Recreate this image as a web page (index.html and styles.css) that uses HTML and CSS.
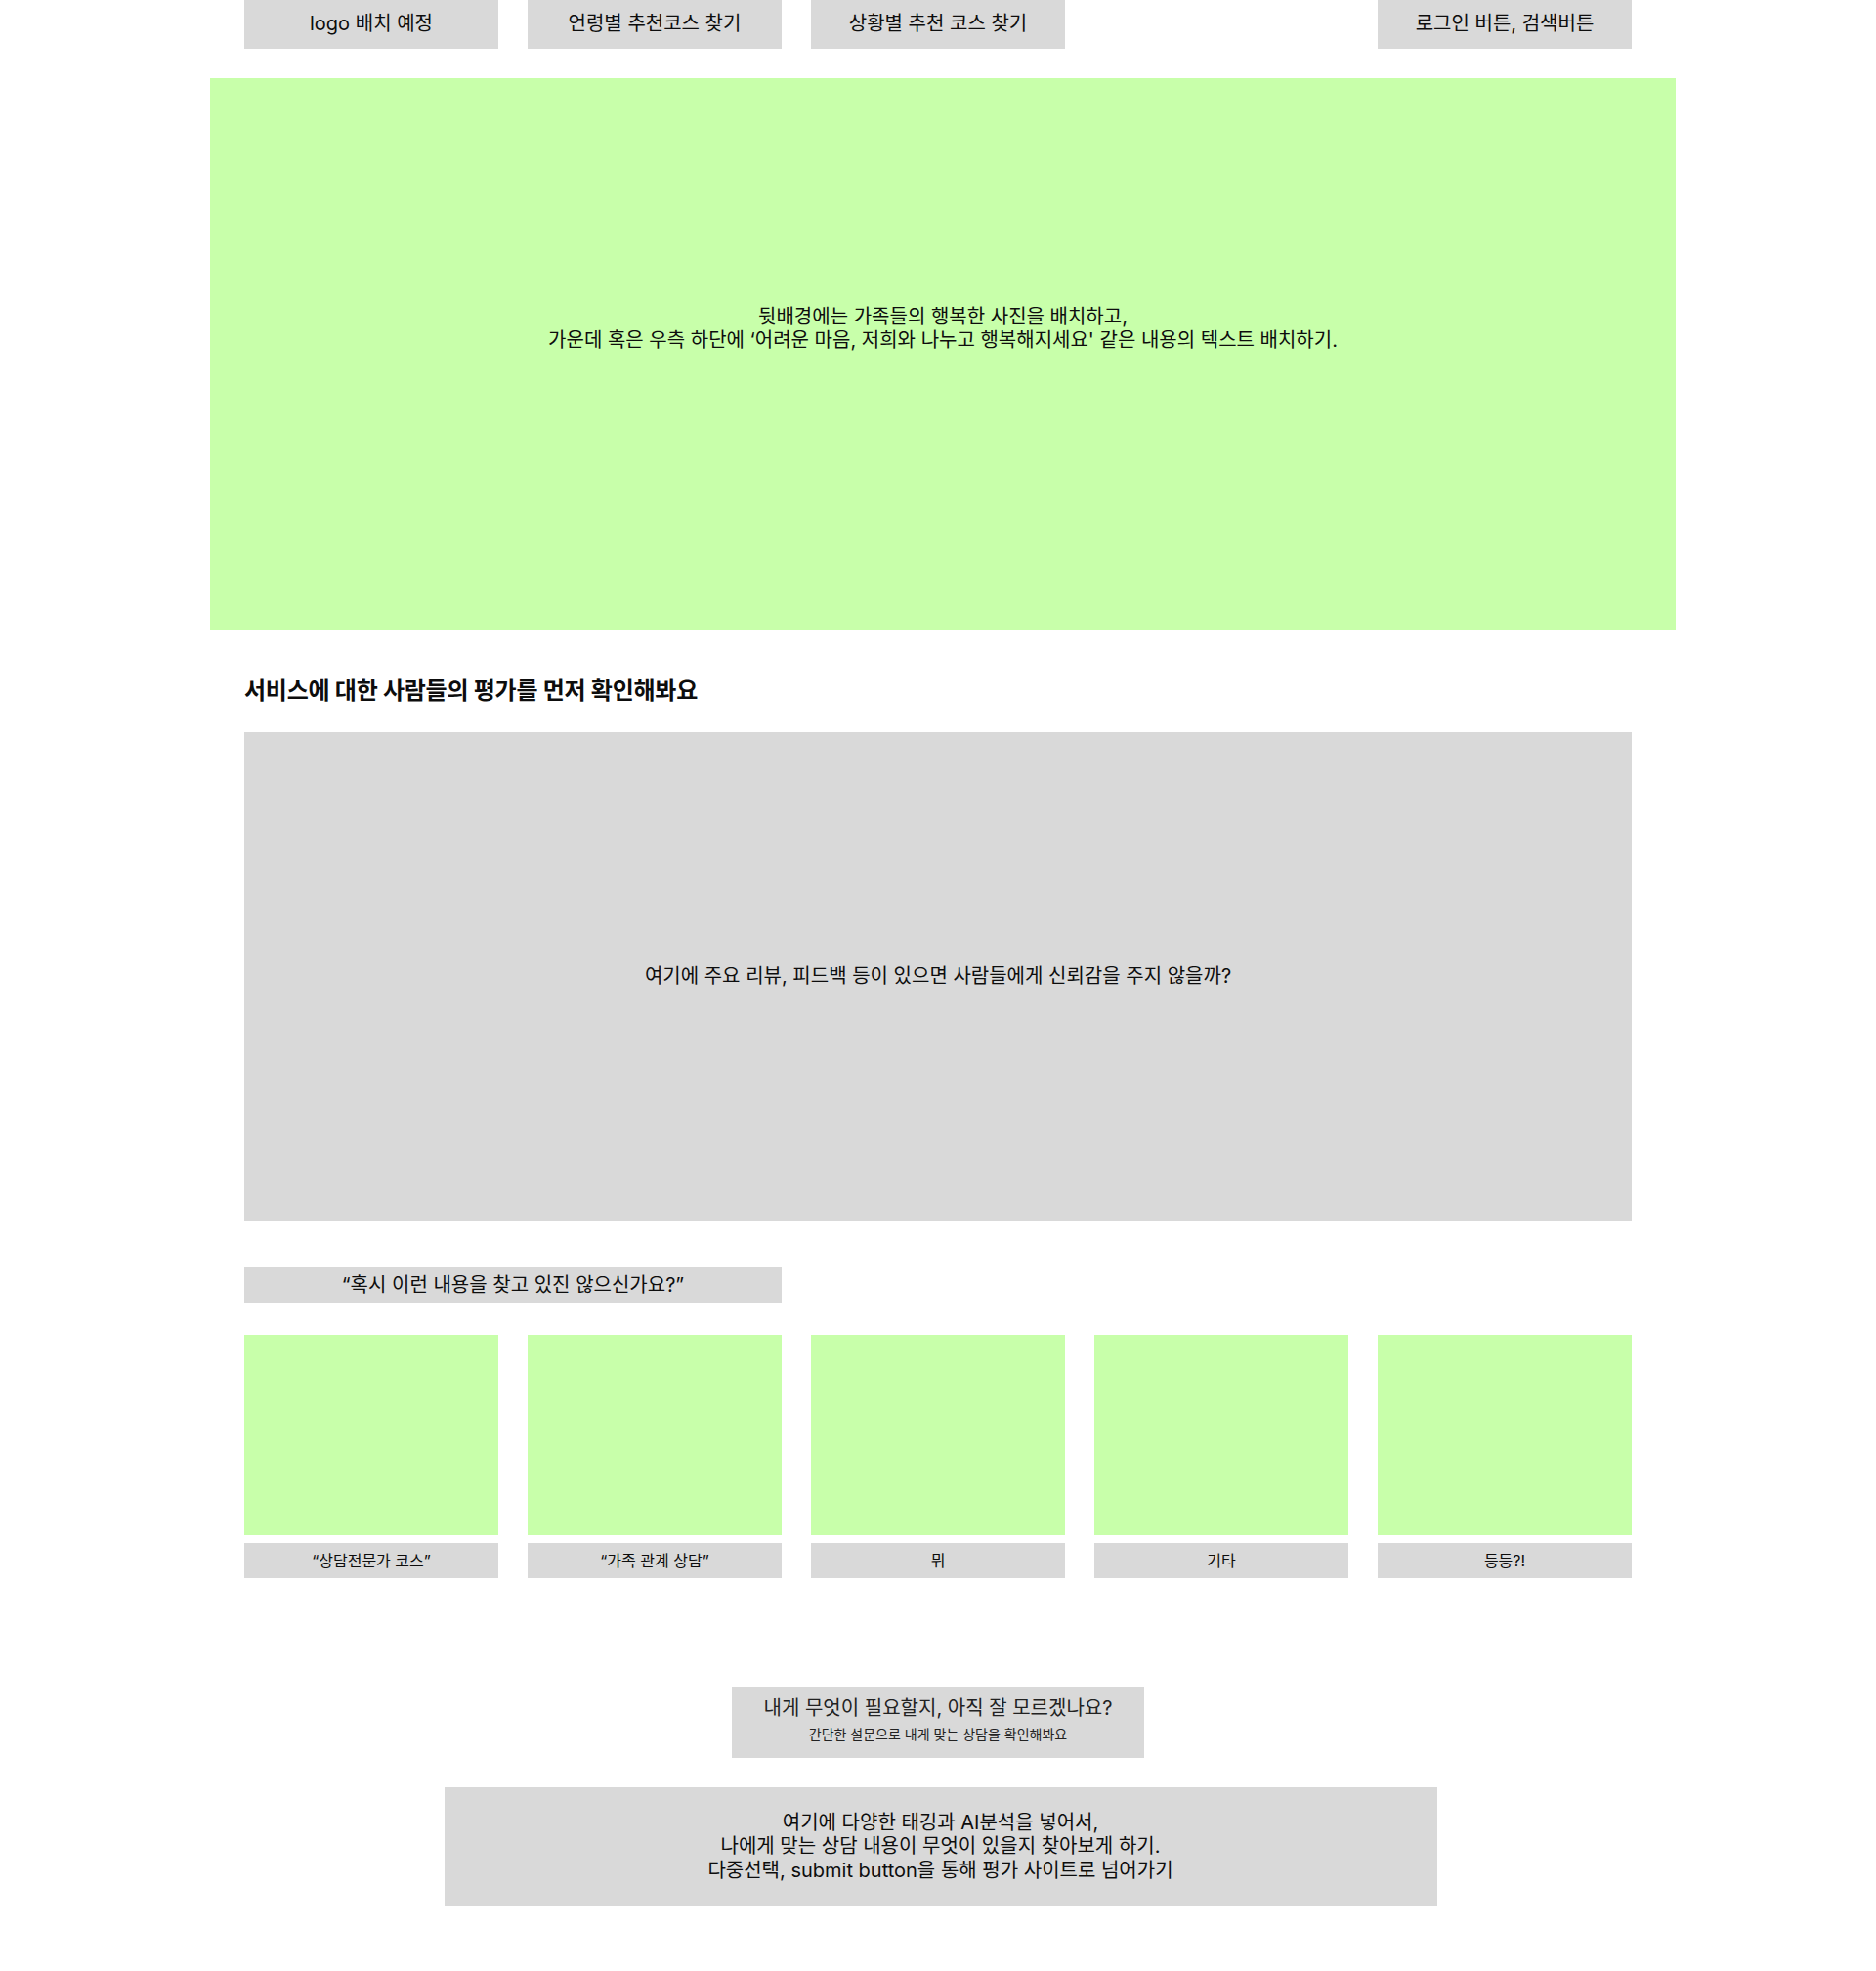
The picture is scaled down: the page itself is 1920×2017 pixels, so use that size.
FILE: index.html
```html
<!DOCTYPE html>
<html lang="ko">
<head>
<meta charset="utf-8">
<title>Wireframe</title>
<link rel="stylesheet" href="styles.css">
</head>
<body>
<div class="page">
  <nav class="nav">
    <div class="nav-item">logo 배치 예정</div>
    <div class="nav-item">언령별 추천코스 찾기</div>
    <div class="nav-item">상황별 추천 코스 찾기</div>
    <div class="nav-spacer"></div>
    <div class="nav-item">로그인 버튼, 검색버튼</div>
  </nav>

  <section class="hero">
    <p class="hero-text">뒷배경에는 가족들의 행복한 사진을 배치하고,<br>가운데 혹은 우측 하단에 ‘어려운 마음, 저희와 나누고 행복해지세요' 같은 내용의 텍스트 배치하기.</p>
  </section>

  <h2 class="section-title">서비스에 대한 사람들의 평가를 먼저 확인해봐요</h2>

  <section class="reviews">
    <p>여기에 주요 리뷰, 피드백 등이 있으면 사람들에게 신뢰감을 주지 않을까?</p>
  </section>

  <div class="question">“혹시 이런 내용을 찾고 있진 않으신가요?”</div>

  <div class="cards">
    <div class="card"><div class="card-img"></div><div class="card-label">“상담전문가 코스”</div></div>
    <div class="card"><div class="card-img"></div><div class="card-label">“가족 관계 상담”</div></div>
    <div class="card"><div class="card-img"></div><div class="card-label">뭐</div></div>
    <div class="card"><div class="card-img"></div><div class="card-label">기타</div></div>
    <div class="card"><div class="card-img"></div><div class="card-label">등등?!</div></div>
  </div>

  <div class="survey">
    <div class="survey-title">내게 무엇이 필요할지, 아직 잘 모르겠나요?</div>
    <div class="survey-sub">간단한 설문으로 내게 맞는 상담을 확인해봐요</div>
  </div>

  <section class="tagging">
    <p>여기에 다양한 태깅과 AI분석을 넣어서,<br>나에게 맞는 상담 내용이 무엇이 있을지 찾아보게 하기.<br>다중선택, submit button을 통해 평가 사이트로 넘어가기</p>
  </section>
</div>
</body>
</html>
```

FILE: styles.css
```css
* {
  box-sizing: border-box;
}

html, body {
  margin: 0;
  padding: 0;
  background: #ffffff;
}

body {
  font-family: "Inter", "Noto Sans CJK KR", sans-serif;
  color: #0d0d0d;
  font-size: 20px;
  letter-spacing: 0;
  min-height: 2017px;
}

p {
  margin: 0;
}

.page {
  width: 1420px;
  margin: 0 auto;
  display: flex;
  flex-direction: column;
}

.nav {
  display: grid;
  grid-template-columns: repeat(5, 260px);
  column-gap: 30px;
  height: 50px;
}

.nav-item {
  background: #d9d9d9;
  display: flex;
  align-items: center;
  justify-content: center;
  font-size: 20px;
  line-height: 24px;
  padding-bottom: 2px;
}

.hero {
  margin-top: 30px;
  margin-left: -35px;
  width: 1500px;
  height: 565px;
  background: #c8ffaa;
  display: flex;
  justify-content: center;
  padding-top: 232px;
}

.hero-text {
  text-align: center;
  font-size: 20px;
  line-height: 24px;
}

.section-title {
  margin: 47px 0 27px;
  font-size: 24px;
  line-height: 30px;
  font-weight: 700;
  letter-spacing: -0.01em;
}

.reviews {
  height: 500px;
  background: #d9d9d9;
  display: flex;
  align-items: center;
  justify-content: center;
}

.reviews p {
  font-size: 20px;
  line-height: 24px;
}

.question {
  margin-top: 48px;
  width: 550px;
  height: 36px;
  background: #d9d9d9;
  display: flex;
  align-items: center;
  justify-content: center;
  font-size: 20px;
  line-height: 24px;
}

.cards {
  margin-top: 33px;
  display: grid;
  grid-template-columns: repeat(5, 260px);
  column-gap: 30px;
}

.card {
  display: flex;
  flex-direction: column;
  gap: 8px;
}

.card-img {
  height: 205px;
  background: #c8ffaa;
}

.card-label {
  height: 36px;
  background: #d9d9d9;
  display: flex;
  align-items: center;
  justify-content: center;
  font-size: 16px;
  line-height: 20px;
}

.survey {
  margin: 111px auto 0;
  width: 422px;
  height: 73px;
  background: #d9d9d9;
  display: flex;
  flex-direction: column;
  align-items: center;
  padding-top: 10px;
}

.survey-title {
  font-size: 20px;
  line-height: 24px;
  color: #222222;
}

.survey-sub {
  margin-top: 6px;
  font-size: 14px;
  line-height: 18px;
  color: #222222;
}

.tagging {
  margin: 30px 0 0 -1px;
  align-self: center;
  width: 1016px;
  position: relative;
  left: 3px;
  height: 121px;
  background: #d9d9d9;
  display: flex;
  align-items: center;
  justify-content: center;
}

.tagging p {
  text-align: center;
  font-size: 20px;
  line-height: 24.5px;
}
```
